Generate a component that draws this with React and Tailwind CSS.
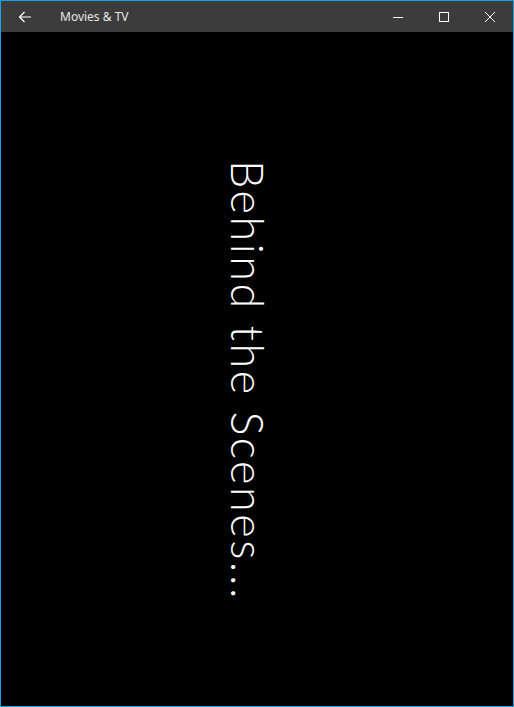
export default function App() {
  return (
    <div className="w-[514px] h-[707px] border border-[#1ba1e2] bg-black flex flex-col font-['Liberation_Sans',sans-serif]">
      <div className="h-[31px] bg-[#3c3c3c] flex items-center text-white shrink-0">
        <div className="w-[48px] h-full flex items-center justify-center">
          <svg width="14" height="12" viewBox="0 0 14 12" fill="none" stroke="white" strokeWidth="1.2">
            <path d="M13 6H1.5M6.5 1L1.5 6l5 5" />
          </svg>
        </div>
        <div className="ml-[11px] text-[12px] text-[#e6e6e6] font-['Noto_Sans',sans-serif]">Movies &amp; TV</div>
        <div className="flex-1" />
        <div className="w-[46px] h-full flex items-center justify-center">
          <svg width="10" height="10" viewBox="0 0 10 10" stroke="white" strokeWidth="1"><path d="M0 5.5h10" /></svg>
        </div>
        <div className="w-[46px] h-full flex items-center justify-center">
          <svg width="10" height="10" viewBox="0 0 10 10" fill="none" stroke="white" strokeWidth="1"><rect x="0.5" y="0.5" width="9" height="9" /></svg>
        </div>
        <div className="w-[46px] h-full flex items-center justify-center">
          <svg width="10" height="10" viewBox="0 0 10 10" stroke="white" strokeWidth="1"><path d="M0 0l10 10M10 0L0 10" /></svg>
        </div>
      </div>
      <div className="flex-1 flex justify-center pt-[128px] pr-[20px]">
        <div className="[writing-mode:vertical-rl] text-white text-[45px] leading-none font-light font-['Lato',sans-serif] tracking-[2.5px]">
          Behind the Scenes...
        </div>
      </div>
    </div>
  );
}
